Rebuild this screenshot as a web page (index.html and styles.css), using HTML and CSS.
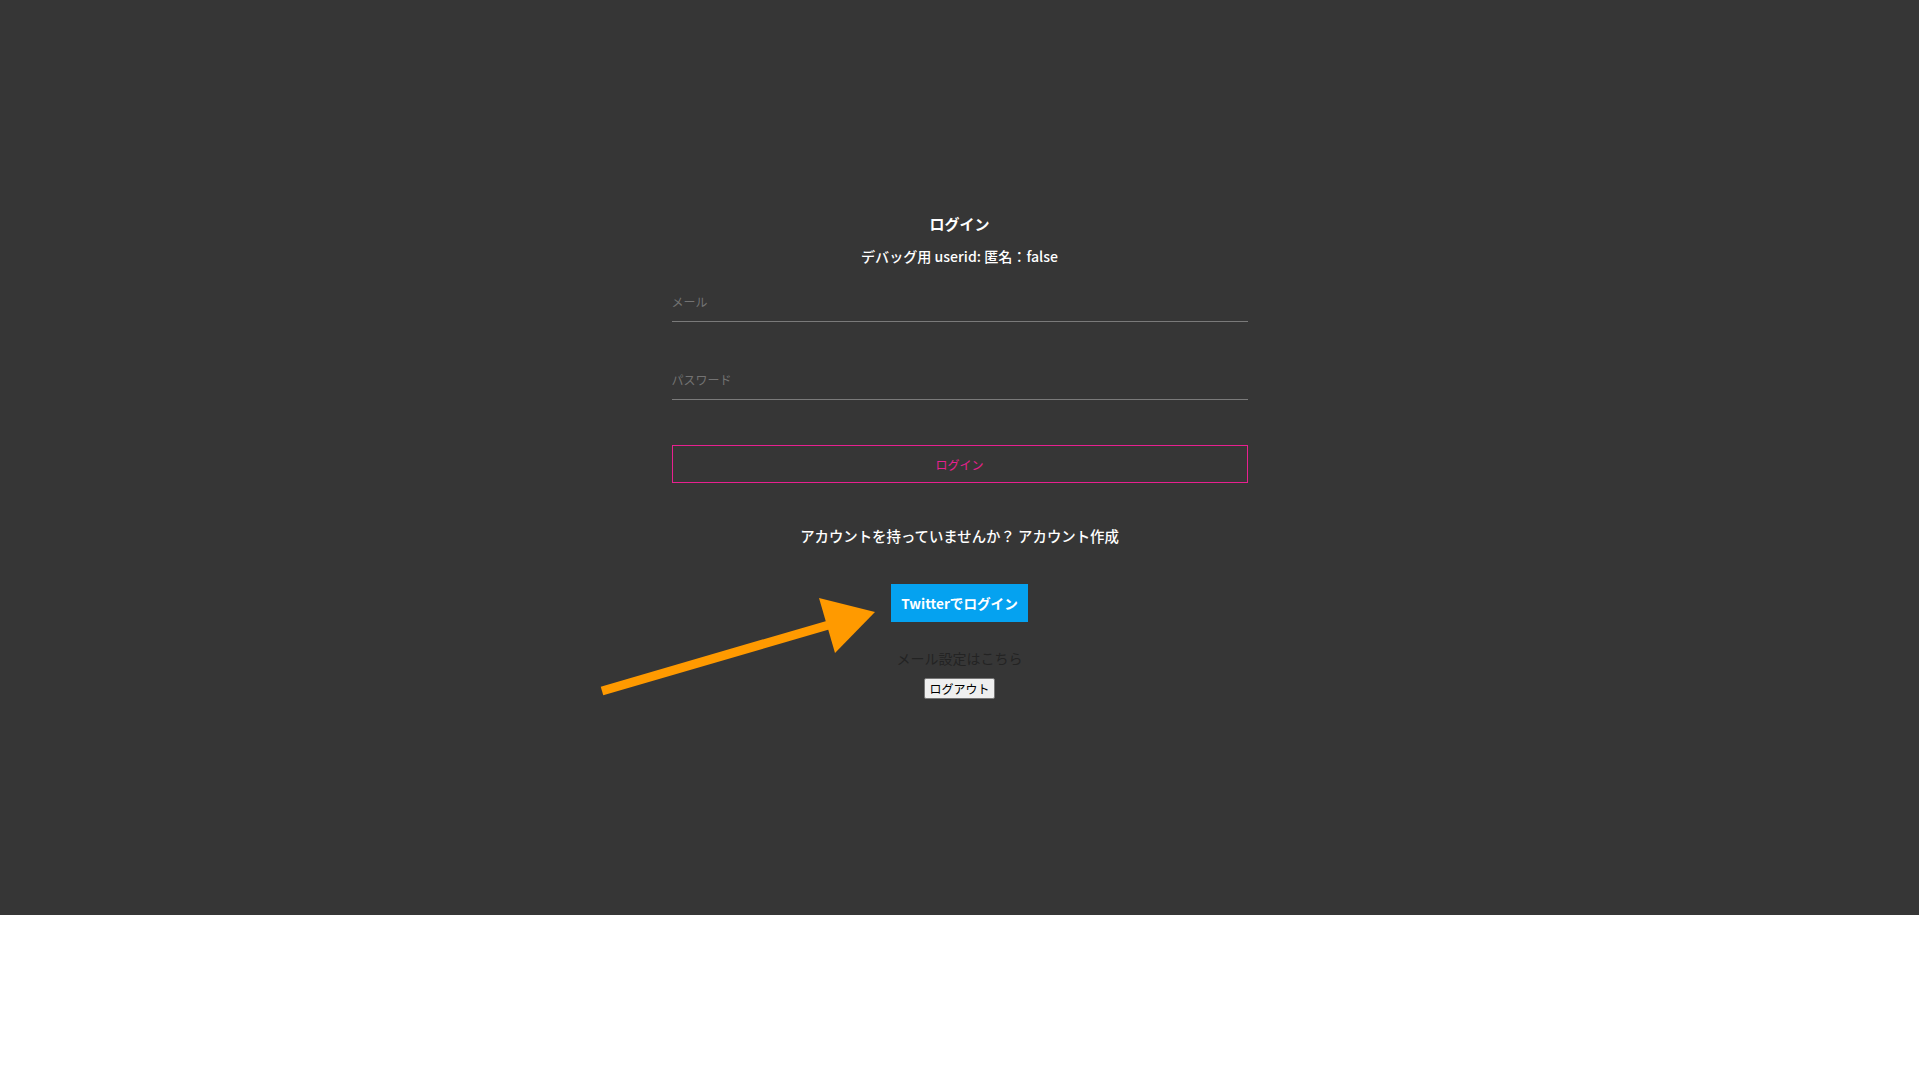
FILE: index.html
```html
<!DOCTYPE html>
<html lang="ja">
<head>
<meta charset="utf-8">
<title>ログイン</title>
<link rel="stylesheet" href="styles.css">
</head>
<body>
<div class="page">
  <div class="form">
    <h1 class="title">ログイン</h1>
    <p class="debug">デバッグ用 userid: 匿名：false</p>
    <input class="field field-email" type="email" placeholder="メール">
    <input class="field field-password" type="password" placeholder="パスワード">
    <button class="login-btn" type="button">ログイン</button>
    <p class="signup">アカウントを持っていませんか？ <span class="signup-link">アカウント作成</span></p>
    <button class="twitter-btn" type="button">Twitterでログイン</button>
    <p class="mail-settings">メール設定はこちら</p>
    <button class="logout-btn" type="button">ログアウト</button>
  </div>
  <svg class="arrow" width="1919" height="1080" viewBox="0 0 1919 1080" aria-hidden="true">
    <line x1="602" y1="691" x2="832" y2="624" stroke="#ff9a00" stroke-width="9"/>
    <polygon points="819,598 875,612 835,653" fill="#ff9a00"/>
  </svg>
</div>
</body>
</html>
```
FILE: styles.css
```css
html, body {
  margin: 0;
  padding: 0;
  background: #ffffff;
}

body {
  font-family: "Noto Sans CJK JP", "Noto Sans", sans-serif;
}

.page {
  position: relative;
  height: 915px;
  background: #363636;
  padding-top: 213px;
  box-sizing: border-box;
}

.form {
  width: 576px;
  margin: 0 auto;
  display: flex;
  flex-direction: column;
  align-items: center;
}

.title {
  margin: 0;
  font-size: 15px;
  line-height: 22px;
  font-weight: 700;
  color: #ffffff;
}

.debug {
  margin: 10px 0 0;
  font-size: 14.1px;
  line-height: 22px;
  font-weight: 500;
  color: #ffffff;
}

.field {
  align-self: stretch;
  box-sizing: border-box;
  height: 41px;
  margin: 14px 0 0;
  padding: 0;
  border: none;
  border-bottom: 1px solid #7a7a7a;
  background: transparent;
  color: #ffffff;
  font-family: inherit;
  font-size: 12px;
  outline: none;
}

.field::placeholder {
  color: #737373;
}

.field-password {
  margin-top: 37px;
}

.login-btn {
  align-self: stretch;
  box-sizing: border-box;
  height: 38px;
  margin-top: 45px;
  border: 1px solid #e8208f;
  background: transparent;
  color: #e8208f;
  font-family: inherit;
  font-size: 12px;
  padding: 0;
}

.signup {
  margin: 42px 0 0;
  font-size: 14.4px;
  line-height: 22px;
  font-weight: 500;
  color: #ffffff;
}

.twitter-btn {
  margin-top: 37px;
  height: 38px;
  padding: 0 10px;
  border: none;
  background: #05a2f0;
  color: #ffffff;
  font-family: inherit;
  font-size: 13.6px;
  font-weight: 700;
}

.mail-settings {
  margin: 26px 0 0;
  font-size: 14px;
  line-height: 20px;
  color: #232323;
}

.logout-btn {
  margin-top: 10px;
  box-sizing: border-box;
  height: 21px;
  padding: 0 4px;
  border: 1px solid #767676;
  border-radius: 2px;
  background: #efefef;
  color: #000000;
  font-family: inherit;
  font-size: 12px;
  line-height: 17px;
}

.arrow {
  position: absolute;
  left: 0;
  top: 0;
  pointer-events: none;
}
```
